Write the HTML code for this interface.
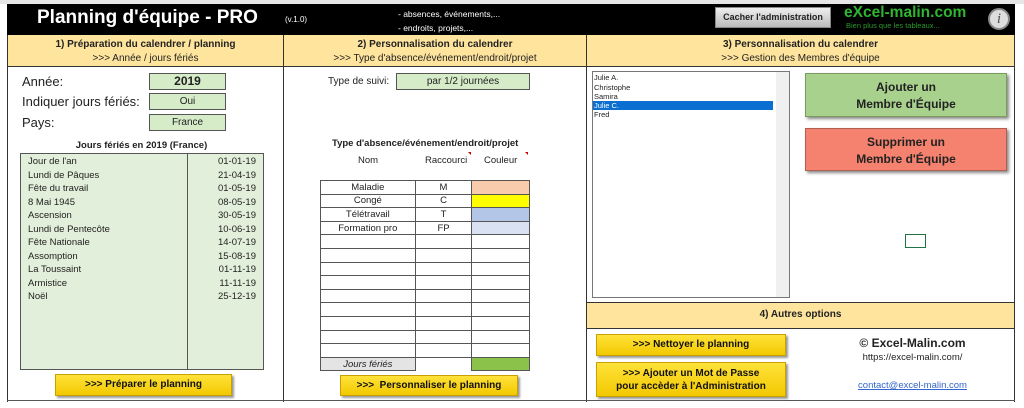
<!DOCTYPE html>
<html><head><meta charset="utf-8"><style>
*{margin:0;padding:0;box-sizing:border-box}
body{width:1024px;height:408px;position:relative;background:#fff;font-family:"Liberation Sans",sans-serif;overflow:hidden;color:#222}
.a{position:absolute}
.c{text-align:center}
.yh{background:#fee49c}
.gb{background:#d6ecc9;border:1px solid #555;text-align:center;font-size:10px}
.btn{position:absolute;background:linear-gradient(#ffe23a,#f2c800);border:1px solid #c8a000;box-shadow:2px 2px 2px #999;font-weight:bold;font-size:10px;text-align:center;color:#111}
td{border:1px solid #555;height:13.6px;font-size:9.5px;text-align:center;padding:0}
table{border-collapse:collapse}
</style></head><body>
<div class="a" style="left:0;top:0;width:1024px;height:4px;background:#e6e6e6"></div>
<div class="a" style="left:7px;top:4px;width:1008px;height:31px;background:#000"></div>
<div class="a" style="left:37px;top:7px;color:#fff;font-weight:bold;font-size:19px">Planning d'équipe - PRO</div>
<div class="a" style="left:285px;top:15px;color:#fff;font-size:8px">(v.1.0)</div>
<div class="a" style="left:398px;top:7px;color:#fff;font-size:8.5px;line-height:14px">- absences, événements,...<br>- endroits, projets,...</div>
<div class="a" style="left:715px;top:7px;width:116px;height:21px;background:linear-gradient(#eee,#bbb);border:1px solid #888;font-size:9px;font-weight:bold;text-align:center;line-height:19px">Cacher l'administration</div>
<div class="a" style="left:844px;top:4px;color:#2fb52f;font-size:15.5px;font-weight:bold">eXcel-malin.com</div>
<div class="a" style="left:846px;top:21px;color:#2a9a2a;font-size:7.5px">Bien plus que les tableaux...</div>
<div class="a" style="left:988px;top:8px;width:22px;height:22px;border-radius:50%;background:#ddd;border:2px solid #888;color:#555;font-style:italic;font-family:'Liberation Serif',serif;font-size:15px;text-align:center;line-height:18px">i</div>

<div class="a yh" style="left:7px;top:35px;width:1008px;height:32px"></div>
<div class="a" style="left:7px;top:35px;width:1px;height:367px;background:#333"></div>
<div class="a" style="left:1014px;top:35px;width:1px;height:367px;background:#333"></div>
<div class="a" style="left:283px;top:35px;width:1px;height:367px;background:#333"></div>
<div class="a" style="left:586px;top:35px;width:1px;height:367px;background:#333"></div>
<div class="a" style="left:7px;top:66px;width:1008px;height:1px;background:#333"></div>
<div class="a" style="left:7px;top:400px;width:1008px;height:1px;background:#555"></div>
<div class="a c" style="left:8px;top:38px;width:275px;font-size:10px;line-height:14px"><b>1) Préparation du calendrer / planning</b><br>&gt;&gt;&gt; Année / jours fériés</div>
<div class="a c" style="left:284px;top:38px;width:302px;font-size:10px;line-height:14px"><b>2) Personnalisation du calendrer</b><br>&gt;&gt;&gt; Type d'absence/événement/endroit/projet</div>
<div class="a c" style="left:587px;top:38px;width:427px;font-size:10px;line-height:14px"><b>3) Personnalisation du calendrer</b><br>&gt;&gt;&gt; Gestion des Membres d'équipe</div>

<div class="a" style="left:22px;top:74px;font-size:13px">Année:</div>
<div class="a" style="left:22px;top:94px;font-size:13px">Indiquer jours fériés:</div>
<div class="a" style="left:22px;top:115px;font-size:13px">Pays:</div>
<div class="a gb" style="left:149px;top:73px;width:77px;height:17px;font-size:12px;font-weight:bold;line-height:15px">2019</div>
<div class="a gb" style="left:149px;top:93px;width:77px;height:17px;line-height:15px">Oui</div>
<div class="a gb" style="left:149px;top:114px;width:77px;height:17px;line-height:15px">France</div>
<div class="a c" style="left:20px;top:140px;width:243px;font-size:9.5px;font-weight:bold">Jours fériés en 2019 (France)</div>
<div class="a" style="left:20px;top:153px;width:244px;height:217px;background:#e2efda;border:1px solid #555"></div>
<div class="a" style="left:187px;top:153px;width:1px;height:217px;background:#555"></div>
<div class="a" style="left:28px;top:155px;font-size:9.5px;line-height:13.5px">Jour de l'an<br>Lundi de Pâques<br>Fête du travail<br>8 Mai 1945<br>Ascension<br>Lundi de Pentecôte<br>Fête Nationale<br>Assomption<br>La Toussaint<br>Armistice<br>Noël</div>
<div class="a" style="left:200px;top:155px;width:56px;text-align:right;font-size:9.5px;line-height:13.5px">01-01-19<br>21-04-19<br>01-05-19<br>08-05-19<br>30-05-19<br>10-06-19<br>14-07-19<br>15-08-19<br>01-11-19<br>11-11-19<br>25-12-19</div>
<div class="btn" style="left:55px;top:374px;width:177px;height:22px;line-height:20px">&gt;&gt;&gt; Préparer le planning</div>

<div class="a" style="left:328px;top:76px;font-size:10px">Type de suivi:</div>
<div class="a gb" style="left:396px;top:73px;width:134px;height:17px;line-height:15px">par 1/2 journées</div>
<div class="a" style="left:332px;top:138px;font-size:9.5px;font-weight:bold">Type d'absence/événement/endroit/projet</div>
<div class="a" style="left:358px;top:155px;font-size:9.5px">Nom</div>
<div class="a" style="left:425px;top:155px;font-size:9.5px">Raccourci</div>
<div class="a" style="left:484px;top:155px;font-size:9.5px">Couleur</div>
<div class="a" style="left:468px;top:152px;border-top:3px solid #c00;border-left:3px solid transparent"></div>
<div class="a" style="left:525px;top:152px;border-top:3px solid #c00;border-left:3px solid transparent"></div>
<table class="a" style="left:320px;top:180px;width:210px">
<colgroup><col style="width:95px"><col style="width:57px"><col style="width:58px"></colgroup>
<tr><td>Maladie</td><td>M</td><td style="background:#f8cbad"></td></tr>
<tr><td>Congé</td><td>C</td><td style="background:#ffff00"></td></tr>
<tr><td>Télétravail</td><td>T</td><td style="background:#b4c6e7"></td></tr>
<tr><td>Formation pro</td><td>FP</td><td style="background:#d9e1f2"></td></tr>
<tr><td></td><td></td><td></td></tr><tr><td></td><td></td><td></td></tr><tr><td></td><td></td><td></td></tr><tr><td></td><td></td><td></td></tr><tr><td></td><td></td><td></td></tr><tr><td></td><td></td><td></td></tr><tr><td></td><td></td><td></td></tr><tr><td></td><td></td><td></td></tr><tr><td></td><td></td><td></td></tr>
<tr><td style="background:#e4e4e4;font-style:italic">Jours fériés</td><td style="border:none"></td><td style="background:#8bc34a"></td></tr>
</table>
<div class="btn" style="left:340px;top:375px;width:178px;height:21px;line-height:19px">&gt;&gt;&gt;&nbsp; Personnaliser le planning</div>

<div class="a" style="left:592px;top:71px;width:198px;height:227px;border:1px solid #777;background:#fff"></div>
<div class="a" style="left:776px;top:72px;width:13px;height:225px;background:#f0f0f0"></div>
<div class="a" style="left:594px;top:73px;font-size:7.5px;line-height:9.5px">Julie A.<br>Christophe<br>Samira</div>
<div class="a" style="left:593px;top:101px;width:180px;height:9px;background:#0a6fd0;color:#fff;font-size:7.5px;line-height:9px;padding-left:1px">Julie C.</div>
<div class="a" style="left:594px;top:110px;font-size:7.5px">Fred</div>
<div class="a c" style="left:805px;top:73px;width:202px;height:44px;background:#a9d18e;border:1px solid #7a9a60;box-shadow:2px 2px 3px #888;font-weight:bold;font-size:12px;line-height:17px;padding-top:5px">Ajouter un<br>Membre d'Équipe</div>
<div class="a c" style="left:805px;top:128px;width:202px;height:43px;background:#f4826e;border:1px solid #b06050;box-shadow:2px 2px 3px #888;font-weight:bold;font-size:12px;line-height:17px;padding-top:5px">Supprimer un<br>Membre d'Équipe</div>
<div class="a" style="left:905px;top:234px;width:21px;height:14px;border:1.5px solid #217346"></div>

<div class="a yh" style="left:587px;top:302px;width:427px;height:27px;border-top:1px solid #333;border-bottom:1px solid #333"></div>
<div class="a c" style="left:587px;top:309px;width:427px;font-size:10px;font-weight:bold">4) Autres options</div>
<div class="btn" style="left:596px;top:334px;width:190px;height:22px;line-height:20px">&gt;&gt;&gt; Nettoyer le planning</div>
<div class="btn" style="left:596px;top:362px;width:190px;height:35px;line-height:13px;padding-top:4px">&gt;&gt;&gt; Ajouter un Mot de Passe<br>pour accèder à l'Administration</div>
<div class="a c" style="left:830px;top:336px;width:165px;font-size:12px;font-weight:bold">© Excel-Malin.com</div>
<div class="a c" style="left:830px;top:352px;width:165px;font-size:9.5px">https://excel-malin.com/</div>
<div class="a c" style="left:830px;top:380px;width:165px;font-size:9.5px;color:#3366cc;text-decoration:underline">contact@excel-malin.com</div>
</body></html>
